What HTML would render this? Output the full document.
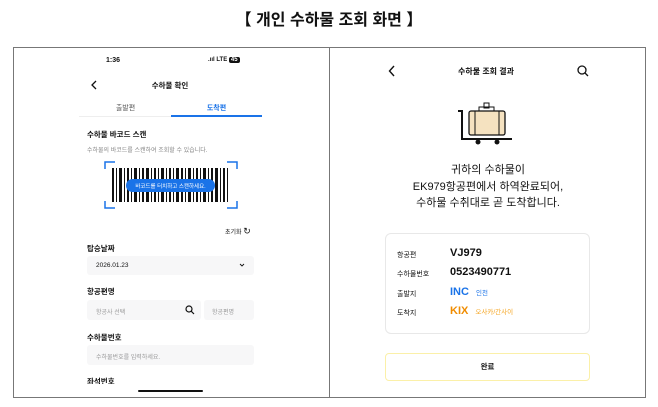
<!DOCTYPE html>
<html><head><meta charset="utf-8"><style>
*{margin:0;padding:0;box-sizing:border-box}
body{width:658px;height:407px;background:#fff;font-family:"Liberation Sans","Noto Sans CJK KR",sans-serif;position:relative;overflow:hidden;color:#111}
.a{position:absolute;white-space:nowrap}
.b{font-weight:bold}
.box{position:absolute;background:#f7f7f8;border-radius:3px}
.lbl{font-size:7.5px;font-weight:bold}
.ph{font-size:6px;color:#999}
</style></head><body>
<div class="a b" style="left:0;width:658px;text-align:center;top:6px;font-size:16px">【 개인 수하물 조회 화면 】</div>

<!-- left -->
<div class="a b" style="left:106px;top:57px;font-size:7px">1:36</div>
<div class="a b" style="left:208px;top:57px;font-size:6px">.ııl LTE <span style="background:#111;color:#fff;border-radius:2px;padding:0 2px">45</span></div>
<svg class="a" style="left:90px;top:80px" width="8" height="10"><path d="M6 1L2 5l4 4" fill="none" stroke="#111" stroke-width="1.3"/></svg>
<div class="a b" style="left:120px;width:100px;text-align:center;top:80px;font-size:7.5px">수하물 확인</div>
<div class="a" style="left:80px;width:91px;text-align:center;top:103px;font-size:7px;color:#555">출발편</div>
<div class="a b" style="left:171px;width:91px;text-align:center;top:103px;font-size:7px;color:#1a73e8">도착편</div>
<div class="a" style="left:79px;top:116px;width:92px;height:1px;background:#eee"></div>
<div class="a" style="left:171px;top:115px;width:91px;height:2px;background:#1a73e8"></div>
<div class="a lbl" style="left:87px;top:129px">수하물 바코드 스캔</div>
<div class="a ph" style="left:87px;top:145px;color:#888">수하물의 바코드를 스캔하여 조회할 수 있습니다.</div>
<svg class="a" style="left:104px;top:161px" width="134" height="48" viewBox="0 0 134 48">
<g fill="none" stroke="#1a73e8" stroke-width="1.5"><path d="M1 8V1h10M123 1h10v7M1 40v7h10M123 47h10v-7"/></g>
<g fill="#111">
<rect x="8" y="7" width="2" height="34"/><rect x="12" y="7" width="1" height="34"/><rect x="15" y="7" width="3" height="34"/><rect x="20" y="7" width="1" height="34"/><rect x="23" y="7" width="2" height="34"/><rect x="27" y="7" width="1" height="34"/><rect x="30" y="7" width="3" height="34"/><rect x="35" y="7" width="1" height="34"/><rect x="38" y="7" width="2" height="34"/><rect x="42" y="7" width="3" height="34"/><rect x="47" y="7" width="1" height="34"/><rect x="50" y="7" width="2" height="34"/><rect x="54" y="7" width="1" height="34"/><rect x="57" y="7" width="3" height="34"/><rect x="62" y="7" width="1" height="34"/><rect x="65" y="7" width="2" height="34"/><rect x="69" y="7" width="1" height="34"/><rect x="72" y="7" width="3" height="34"/><rect x="77" y="7" width="2" height="34"/><rect x="81" y="7" width="1" height="34"/><rect x="84" y="7" width="3" height="34"/><rect x="89" y="7" width="1" height="34"/><rect x="92" y="7" width="2" height="34"/><rect x="96" y="7" width="1" height="34"/><rect x="99" y="7" width="3" height="34"/><rect x="104" y="7" width="1" height="34"/><rect x="107" y="7" width="2" height="34"/><rect x="111" y="7" width="3" height="34"/><rect x="116" y="7" width="1" height="34"/><rect x="119" y="7" width="2" height="34"/><rect x="123" y="7" width="1" height="34"/>
</g>
<rect x="22" y="18" width="89" height="13" rx="6.5" fill="#1a73e8"/>
<text x="66.5" y="27" font-size="5.5" fill="#fff" text-anchor="middle" font-family="Liberation Sans,Noto Sans CJK KR,sans-serif">바코드를 터치하고 스캔하세요.</text>
</svg>
<div class="a" style="left:225px;top:226px;font-size:6px">초기화 <span style="font-size:9px">↻</span></div>
<div class="a lbl" style="left:87px;top:243px">탑승날짜</div>
<div class="box" style="left:87px;top:256px;width:167px;height:19px"></div>
<div class="a" style="left:96px;top:262px;font-size:6.5px">2026.01.23</div>
<svg class="a" style="left:239px;top:263px" width="6" height="5"><path d="M1 1l2 2 2-2" fill="none" stroke="#111" stroke-width="0.9"/></svg>
<div class="a lbl" style="left:87px;top:286px">항공편명</div>
<div class="box" style="left:87px;top:300px;width:114px;height:20px"></div>
<div class="a ph" style="left:96px;top:307px">항공사 선택</div>
<svg class="a" style="left:185px;top:305px" width="10" height="10"><circle cx="4" cy="4" r="3" fill="none" stroke="#111" stroke-width="1.2"/><path d="M6.3 6.3L9 9" stroke="#111" stroke-width="1.2"/></svg>
<div class="box" style="left:204px;top:300px;width:50px;height:20px"></div>
<div class="a ph" style="left:212px;top:307px">항공편명</div>
<div class="a lbl" style="left:87px;top:332px">수하물번호</div>
<div class="box" style="left:87px;top:345px;width:167px;height:20px"></div>
<div class="a ph" style="left:96px;top:352px">수하물번호를 입력하세요.</div>
<div class="a lbl" style="left:87px;top:376px;height:8px;overflow:hidden">좌석번호</div>
<div class="a" style="left:138px;top:390px;width:65px;height:2px;background:#111;border-radius:1px"></div>

<div class="a" style="left:13px;top:47px;width:633px;height:351px;border:1px solid #777"></div>
<div class="a" style="left:329px;top:47px;width:1px;height:351px;background:#777"></div>

<!-- right -->
<svg class="a" style="left:388px;top:65px" width="8" height="12"><path d="M6 1L1.5 6 6 11" fill="none" stroke="#111" stroke-width="1.4"/></svg>
<div class="a b" style="left:436px;width:100px;text-align:center;top:66px;font-size:8px">수하물 조회 결과</div>
<svg class="a" style="left:577px;top:65px" width="12" height="12"><circle cx="5" cy="5" r="4" fill="none" stroke="#111" stroke-width="1.3"/><path d="M8 8L11 11" stroke="#111" stroke-width="1.3"/></svg>
<svg class="a" style="left:456px;top:100px" width="58" height="46" viewBox="0 0 58 46">
<path d="M2 11h4v28h50" fill="none" stroke="#111" stroke-width="2"/>
<rect x="28" y="3" width="5" height="5" fill="none" stroke="#111" stroke-width="1"/>
<rect x="23" y="7" width="15" height="4" fill="none" stroke="#111" stroke-width="1"/>
<rect x="13" y="11" width="36" height="24" rx="2" fill="#f5e2c0" stroke="#111" stroke-width="1.3"/>
<path d="M19 11v24M43 11v24" stroke="#111" stroke-width="1"/>
<circle cx="22" cy="42" r="2.5" fill="#111"/><circle cx="41" cy="42" r="2.5" fill="#111"/>
</svg>
<div class="a" style="left:330px;width:316px;text-align:center;top:162px;font-size:11px;line-height:16.5px">귀하의 수하물이<br>EK979항공편에서 하역완료되어,<br>수하물 수취대로 곧 도착합니다.</div>
<div class="a" style="left:385px;top:233px;width:205px;height:101px;border:1px solid #e8e8e8;border-radius:6px"></div>
<div class="a" style="left:397px;top:250px;font-size:7px">항공편</div>
<div class="a b" style="left:450px;top:247px;font-size:11px">VJ979</div>
<div class="a" style="left:397px;top:269px;font-size:7px">수하물번호</div>
<div class="a b" style="left:450px;top:266px;font-size:11px">0523490771</div>
<div class="a" style="left:397px;top:289px;font-size:7px">출발지</div>
<div class="a b" style="left:450px;top:286px;font-size:11px;color:#1a73e8">INC <span style="font-size:6.5px;font-weight:normal;margin-left:4px">인천</span></div>
<div class="a" style="left:397px;top:308px;font-size:7px">도착지</div>
<div class="a b" style="left:450px;top:305px;font-size:11px;color:#f08c00">KIX <span style="font-size:6.5px;font-weight:normal;margin-left:4px;color:#f5a623">오사카/간사이</span></div>
<div class="a" style="left:385px;top:353px;width:205px;height:28px;border:1px solid #fbf0a8;border-radius:4px;text-align:center;line-height:26px;font-size:7.5px;font-weight:bold">완료</div>
</body></html>
